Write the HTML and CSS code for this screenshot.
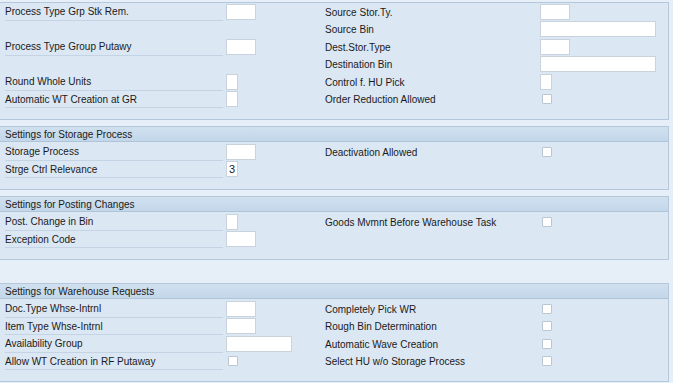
FILE: index.html
```html
<!doctype html>
<html>
<head>
	<meta charset="utf-8">
	<title>Warehouse Process Type</title>
	<link rel="stylesheet" href="styles.css">
</head>
<body>
	<div class="screen">
		<div class="panel">
			<div class="grid">
				<div class="cell left"><span class="lbl">Process Type Grp Stk Rem.</span><input class="fld" type="text"></div>
				<div class="cell"><span class="lbl">Source Stor.Ty.</span><input class="fld" type="text"></div>
				<div class="cell left"></div>
				<div class="cell"><span class="lbl">Source Bin</span><input class="fld wide" type="text"></div>
				<div class="cell left"><span class="lbl">Process Type Group Putawy</span><input class="fld" type="text"></div>
				<div class="cell"><span class="lbl">Dest.Stor.Type</span><input class="fld" type="text"></div>
				<div class="cell left"></div>
				<div class="cell"><span class="lbl">Destination Bin</span><input class="fld wide" type="text"></div>
				<div class="cell left"><span class="lbl">Round Whole Units</span><input class="fld one" type="text"></div>
				<div class="cell"><span class="lbl">Control f. HU Pick</span><input class="fld one" type="text"></div>
				<div class="cell left"><span class="lbl">Automatic WT Creation at GR</span><input class="fld one" type="text"></div>
				<div class="cell"><span class="lbl">Order Reduction Allowed</span><input class="chk" type="checkbox"></div>
			</div>
		</div>

		<div class="panel">
			<div class="hdr">Settings for Storage Process</div>
			<div class="grid">
				<div class="cell left"><span class="lbl">Storage Process</span><input class="fld" type="text"></div>
				<div class="cell"><span class="lbl">Deactivation Allowed</span><input class="chk" type="checkbox"></div>
				<div class="cell left"><span class="lbl">Strge Ctrl Relevance</span><input class="fld one" type="text" value="3"></div>
				<div class="cell"></div>
			</div>
		</div>

		<div class="panel">
			<div class="hdr">Settings for Posting Changes</div>
			<div class="grid">
				<div class="cell left"><span class="lbl">Post. Change in Bin</span><input class="fld one" type="text"></div>
				<div class="cell"><span class="lbl">Goods Mvmnt Before Warehouse Task</span><input class="chk" type="checkbox"></div>
				<div class="cell left"><span class="lbl">Exception Code</span><input class="fld" type="text"></div>
				<div class="cell"></div>
			</div>
		</div>

		<div class="panel far">
			<div class="hdr">Settings for Warehouse Requests</div>
			<div class="grid">
				<div class="cell left"><span class="lbl">Doc.Type Whse-Intrnl</span><input class="fld" type="text"></div>
				<div class="cell"><span class="lbl">Completely Pick WR</span><input class="chk" type="checkbox"></div>
				<div class="cell left"><span class="lbl">Item Type Whse-Intrnl</span><input class="fld" type="text"></div>
				<div class="cell"><span class="lbl">Rough Bin Determination</span><input class="chk" type="checkbox"></div>
				<div class="cell left"><span class="lbl">Availability Group</span><input class="fld mid" type="text"></div>
				<div class="cell"><span class="lbl">Automatic Wave Creation</span><input class="chk" type="checkbox"></div>
				<div class="cell left"><span class="lbl">Allow WT Creation in RF Putaway</span><input class="chk" type="checkbox"></div>
				<div class="cell"><span class="lbl">Select HU w/o Storage Process</span><input class="chk" type="checkbox"></div>
			</div>
		</div>
	</div>
</body>
</html>
```

FILE: styles.css
```css
*{margin: 0; padding: 0; box-sizing: border-box;}
body{ background: #e6eef7; font-family: "Liberation Sans", Arial, sans-serif; font-size: 10px; color: #1a1a1a;}

.screen {width: 669px; padding-top: 2px; display: flex; flex-direction: column; gap: 6px;}

.panel {background: #dbe7f3; border: 1px solid #b5c8db; border-left: none; padding-bottom: 11px;}
.panel.far {margin-top: 17px;}

.hdr {height: 15px; line-height: 15px; padding-left: 5px; background: linear-gradient(#d0e0ef, #c3d7ea); border-bottom: 1px solid #b0c4d8; margin-bottom: 1px;}

.grid {display: grid; grid-template-columns: 320px 1fr; grid-auto-rows: 17.5px;}
.cell {display: flex; align-items: center; padding-left: 5px;}
.cell .lbl {width: 215px; white-space: nowrap; padding-top: 1px;}
.cell.left .lbl {width: 218px; margin-right: 3px; align-self: stretch; display: flex; align-items: center; border-bottom: 1px solid #c4d4e4;}

.fld {width: 30px; height: 16px; border: 1px solid #c9d3dd; background: #fff; font: inherit; font-size: 11px; color: #1a1a1a; padding: 0 2px; outline: none;}
.fld.one {width: 12px;}
.fld.mid {width: 66px;}
.fld.wide {width: 116px;}

.chk {appearance: none; -webkit-appearance: none; width: 10px; height: 10px; margin-left: 2px; border: 1px solid #bac6d2; border-radius: 1px; background: #fff;}
```
